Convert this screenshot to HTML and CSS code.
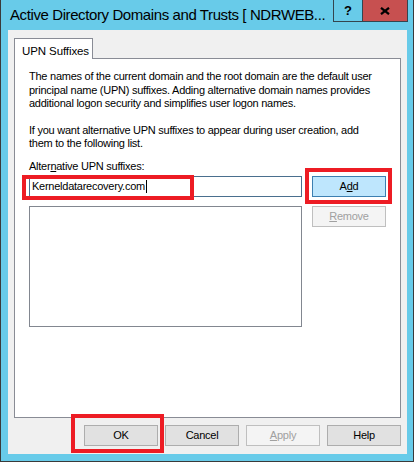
FILE: index.html
```html
<!DOCTYPE html>
<html>
<head>
<meta charset="UTF-8">
<title>UPN Suffixes</title>

<link rel="stylesheet" href="styles.css">

</head>
<body>
	<div class="window">

		<!-- caption -->
		<div class="titlebar">
			<span class="title">Active Directory Domains and Trusts [ NDRWEB...</span>
			<div class="capbtns">
				<span class="cap-help">?</span>
				<span class="cap-close">
					<svg width="10" height="8" viewBox="0 0 10 8"><path d="M1 0.8 L9 7.2 M9 0.8 L1 7.2" stroke="#000" stroke-width="2.2" fill="none"/></svg>
				</span>
			</div>
		</div>

		<div class="client">
			<div class="tabs">
				<span class="tab">UPN Suffixes</span>
			</div>

			<div class="panel">
				<p class="txt">The names of the current domain and the root domain are the default user principal name (UPN) suffixes. Adding alternative domain names provides additional logon security and simplifies user logon names.</p>
				<p class="txt second">If you want alternative UPN suffixes to appear during user creation, add them to the following list.</p>
				<label class="lbl">Alter<u>n</u>ative UPN suffixes:</label>

				<div class="editrow">
					<div class="leftcol">
						<div class="textbox">
							<span>Kerneldatarecovery.com</span><span class="caret"></span>
							<span class="mark mark-field"></span>
						</div>
						<div class="listbox"></div>
					</div>
					<div class="rightcol">
						<div class="btn btn-add">A<u>d</u>d<span class="mark mark-add"></span></div>
						<div class="btn btn-off"><u>R</u>emove</div>
					</div>
				</div>
			</div>

			<div class="dlgbtns">
				<div class="btn">OK<span class="mark mark-ok"></span></div>
				<div class="btn">Cancel</div>
				<div class="btn btn-off"><u>A</u>pply</div>
				<div class="btn">Help</div>
			</div>
		</div>

	</div>
</body>
</html>
```

FILE: styles.css
```css
html, body {
	margin: 0;
	padding: 0;
	background: #68cbe9;
}

body {
	font-family: "Liberation Sans", Arial, sans-serif;
	font-size: 11px;
	letter-spacing: -0.25px;
	color: #000;
}

/* the whole dialog */
.window {
	width: 414px;
	height: 462px;
	box-sizing: border-box;
	background: #68cbe9;
	border: 1px solid #3a3a3a;
	border-top: none;
	display: flex;
	flex-direction: column;
}

.titlebar {
	height: 30px;
	display: flex;
	justify-content: space-between;
	align-items: flex-start;
	padding: 0 5px 0 9px;
}

.title {
	font-size: 15px;
	letter-spacing: -0.4px;
	line-height: 15px;
	padding-top: 7px;
	white-space: nowrap;
}

.capbtns {
	display: flex;
}

.cap-help, .cap-close {
	height: 22px;
	box-sizing: border-box;
	border: 1px solid #34454f;
	border-top: none;
	display: flex;
	align-items: center;
	justify-content: center;
}

.cap-help {
	width: 29px;
	border-right: none;
	font-weight: bold;
	font-size: 13px;
	letter-spacing: 0;
	padding-bottom: 1px;
}

.cap-close {
	width: 46px;
	background: #c75050;
}

/* client area */
.client {
	flex: 1;
	margin: 0 6px 7px 7px;
	background: #f0f0f0;
	padding: 8px 6px 8px 6px;
}

.tabs {
	display: flex;
	position: relative;
	z-index: 1; /* tab sits over the panel line */
	margin-bottom: -1px;
}

.tab {
	width: 79px;
	height: 21px;
	box-sizing: border-box;
	background: #fff;
	border: 1px solid #898c95;
	border-bottom: none;
	padding: 6px 0 0 7px;
	font-size: 11.5px;
	letter-spacing: -0.1px;
	line-height: 13px;
}

.panel {
	height: 360px;
	box-sizing: border-box;
	background: #fff;
	border: 1px solid #898c95;
	padding: 11px 13px 0 14px;
}

.txt {
	margin: 0 9px 0 0; /* text wraps a bit before the buttons edge */
	line-height: 13.5px;
}

.txt.second {
	margin-top: 13px;
}

.lbl {
	display: block;
	margin-top: 9px;
	line-height: 13.5px;
}

.editrow {
	display: flex;
	gap: 10px;
	margin-top: 3px;
}

.leftcol {
	width: 273px;
	display: flex;
	flex-direction: column;
	gap: 9px;
}

.textbox {
	position: relative;
	height: 21px;
	box-sizing: border-box;
	border: 1px solid #4a6f8e;
	padding-left: 2px;
	display: flex;
	align-items: center;
	line-height: 13.5px;
}

.caret {
	width: 1px;
	height: 13px;
	background: #000;
	margin-left: 1px;
}

.listbox {
	height: 121px;
	box-sizing: border-box;
	border: 1px solid #828790;
}

.rightcol {
	display: flex;
	flex-direction: column;
	gap: 9px;
}

/* push buttons */
.btn {
	position: relative;
	width: 74px;
	height: 21px;
	box-sizing: border-box;
	background: #e1e1e1;
	border: 1px solid #adadad;
	display: flex;
	align-items: center;
	justify-content: center;
	line-height: 13px;
}

.btn-add {
	background: #bee6fd;
	border-color: #3c7fb1;
}

.btn-off {
	background: #f4f4f4;
	border-color: #bfbfbf;
	color: #a0a0a0;
}

.dlgbtns {
	display: flex;
	justify-content: flex-end;
	gap: 7px;
	margin-top: 7px;
}

/* red highlight frames drawn over the screenshot */
.mark {
	position: absolute;
	border: 4px solid #ed1c24;
	pointer-events: none;
}

.mark-field {
	top: -2px;
	left: -8px;
	right: 107px;
	bottom: -4px;
}

.mark-add {
	top: -9px;
	left: -8px;
	right: -7px;
	bottom: -8px;
}

.mark-ok {
	top: -12px;
	left: -14px;
	right: -7px;
	bottom: -8px;
}
```
